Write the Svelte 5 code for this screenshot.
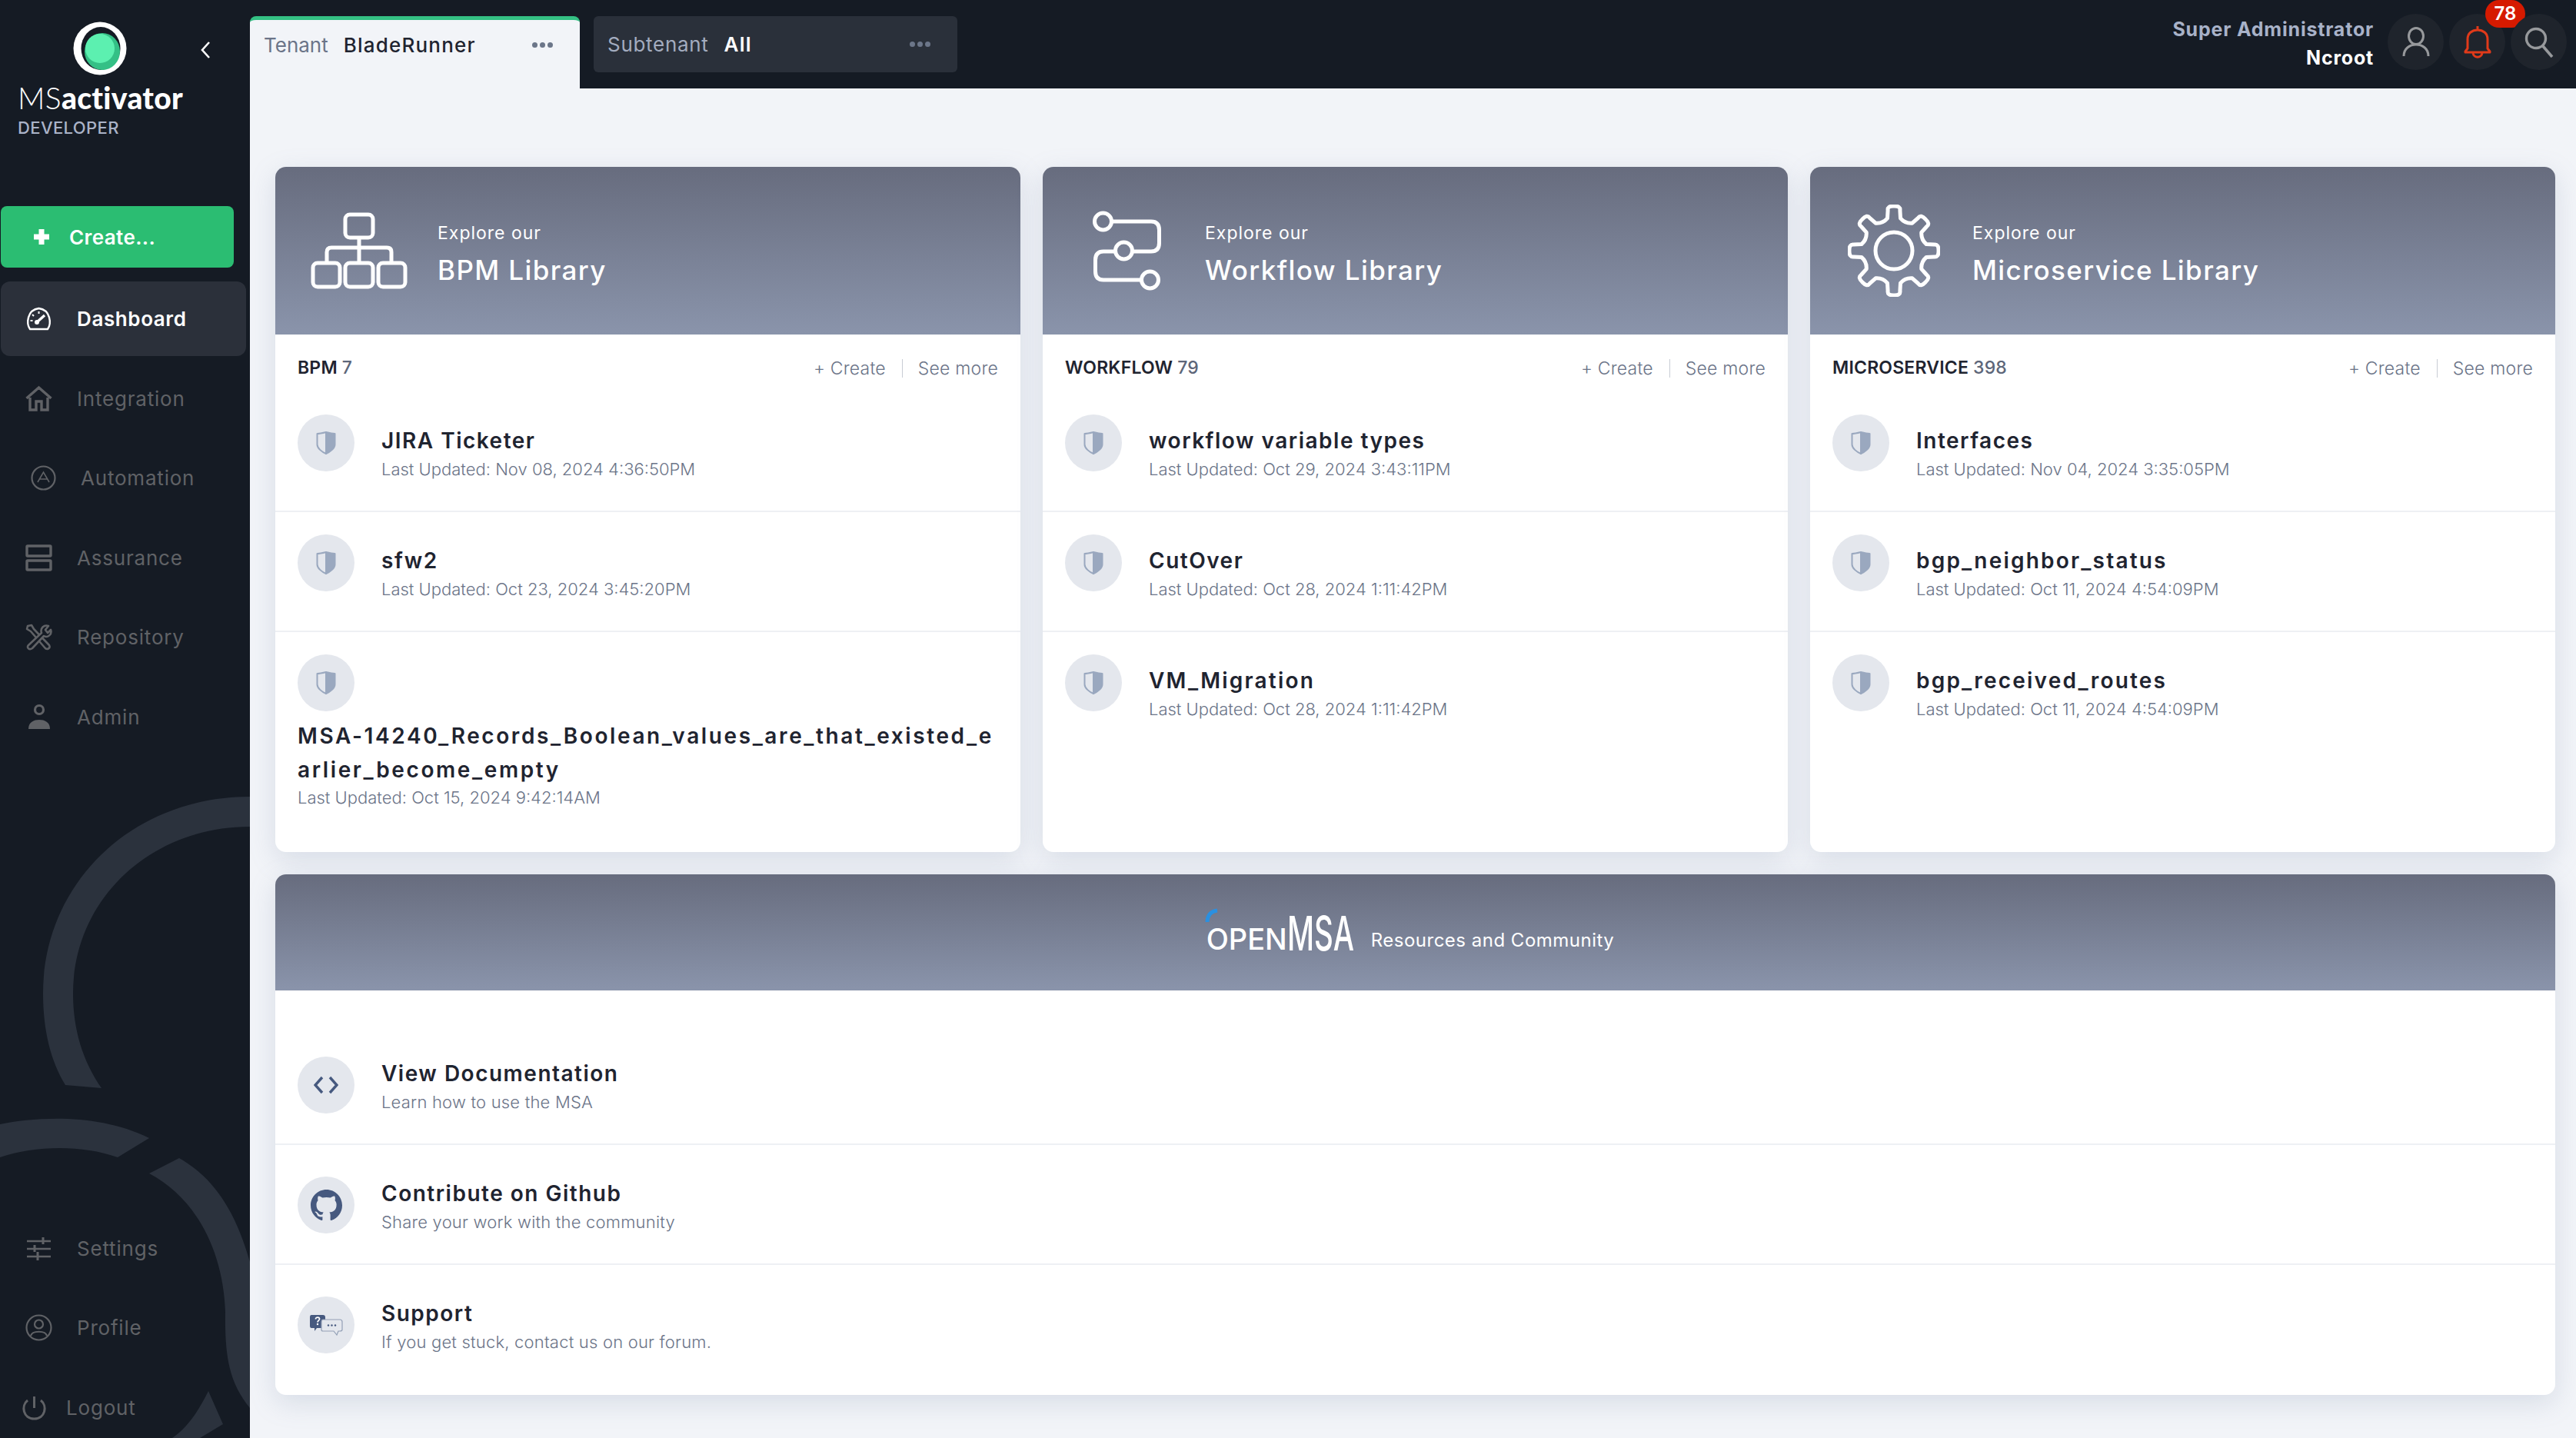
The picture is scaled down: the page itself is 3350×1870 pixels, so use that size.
<script>
  function gearPath(cx, cy, rOut, rIn, teeth) {
    let d = '';
    const step = (Math.PI * 2) / teeth;
    const pt = (r, a) => (cx + r * Math.sin(a)).toFixed(1) + ' ' + (cy - r * Math.cos(a)).toFixed(1);
    for (let i = 0; i < teeth; i++) {
      const a = i * step;
      const w = 0.15;
      d += (i === 0 ? 'M' : 'L') + pt(rIn, a - 0.2);
      d += 'L' + pt(rOut - 5, a - w) + 'Q' + pt(rOut + 1, a - w) + ' ' + pt(rOut, a);
      d += 'Q' + pt(rOut + 1, a + w) + ' ' + pt(rOut - 5, a + w);
      d += 'L' + pt(rIn, a + 0.2);
      d += 'Q' + pt(rIn - 5, a + step / 2) + ' ' + pt(rIn, a + step - 0.2);
    }
    return d + 'Z';
  }
  const gear = gearPath(60, 60, 58, 43, 8);

  const cards = [
    { key: 'bpm', title: 'BPM Library', label: 'BPM', count: 7, rows: [
      { name: 'JIRA Ticketer', date: 'Nov 08, 2024 4:36:50PM' },
      { name: 'sfw2', date: 'Oct 23, 2024 3:45:20PM' },
      { lines: ['MSA-14240_Records_Boolean_values_are_that_existed_e', 'arlier_become_empty'], date: 'Oct 15, 2024 9:42:14AM' }
    ]},
    { key: 'wf', title: 'Workflow Library', label: 'WORKFLOW', count: 79, rows: [
      { name: 'workflow variable types', date: 'Oct 29, 2024 3:43:11PM' },
      { name: 'CutOver', date: 'Oct 28, 2024 1:11:42PM' },
      { name: 'VM_Migration', date: 'Oct 28, 2024 1:11:42PM' }
    ]},
    { key: 'ms', title: 'Microservice Library', label: 'MICROSERVICE', count: 398, rows: [
      { name: 'Interfaces', date: 'Nov 04, 2024 3:35:05PM' },
      { name: 'bgp_neighbor_status', date: 'Oct 11, 2024 4:54:09PM' },
      { name: 'bgp_received_routes', date: 'Oct 11, 2024 4:54:09PM' }
    ]}
  ];
  const resources = [
    { key: 'code', name: 'View Documentation', sub: 'Learn how to use the MSA' },
    { key: 'git', name: 'Contribute on Github', sub: 'Share your work with the community' },
    { key: 'chat', name: 'Support', sub: 'If you get stuck, contact us on our forum.' }
  ];
</script>

{#snippet shield()}
  <svg class="shield" viewBox="0 0 26 30" width="26" height="30">
    <path d="M13 1 C9 2 5 3 1.5 3 V17 C1.5 22 8 27 13 29 Z" fill="none" stroke="#9aa8bf" stroke-width="2" stroke-linejoin="round"/>
    <path d="M13 1 C17 2 21 3 24.5 3 V17 C24.5 22 18 27 13 29 Z" fill="#9aa8bf" stroke="#9aa8bf" stroke-width="2" stroke-linejoin="round"/>
  </svg>
{/snippet}

<div class="page">
  <aside class="side">
    <svg class="swoosh" viewBox="0 0 325 1870" width="325" height="1870">
      <path d="M325 1036 C170 1036 56 1150 56 1292 C56 1340 66 1380 85 1411 L132 1415 C108 1380 95 1340 95 1292 C95 1170 195 1075 325 1075 Z" fill="#2b323d"/>
      <path d="M0 1462 C50 1452 130 1448 194 1480 L153 1505 C105 1488 45 1490 0 1505 Z" fill="#2b323d"/>
      <path d="M233 1506 C275 1530 305 1570 325 1641 L325 1831 C300 1800 292 1770 293 1706 C290 1620 250 1555 194 1526 Z" fill="#2b323d"/>
      <path d="M271 1809 L290 1852 L260 1870 L224 1870 C245 1855 258 1835 271 1809 Z" fill="#2b323d"/>
    </svg>

    <div class="brand">
      <svg class="logo" viewBox="0 0 70 70" width="70" height="70">
        <circle cx="35" cy="35" r="34.5" fill="#fff"/>
        <ellipse cx="36" cy="35" rx="25.5" ry="28" fill="#151b24"/>
        <ellipse cx="38" cy="39" rx="23" ry="24" fill="#34c086"/>
        <ellipse cx="35" cy="35" rx="19" ry="19" fill="#5cf0b0"/>
      </svg>
      <svg class="chev" viewBox="0 0 14 24" width="14" height="24"><path d="M12 2 L3 12 L12 22" fill="none" stroke="#fff" stroke-width="2.6"/></svg>
      <div class="word"><span class="ms">MS</span><b>activator</b></div>
      <div class="dev">DEVELOPER</div>
    </div>

    <button class="create">
      <svg viewBox="0 0 22 22" width="22" height="22"><path d="M11 1 V21 M1 11 H21" stroke="#fff" stroke-width="7"/></svg>
      <span>Create...</span>
    </button>

    <nav class="nav">
      <div class="item active">
        <svg class="ic" viewBox="0 0 35 35"><path d="M6 31 C1 24 2 6 17.5 4 C33 6 34 24 29 31 Z" fill="none" stroke="#fff" stroke-width="2.4" stroke-linejoin="round"/><path d="M15 22 L25 13" stroke="#fff" stroke-width="3.4"/><circle cx="15" cy="22" r="3" fill="#fff"/><path d="M17.5 8 v3 M9 12 l2 2 M6.5 20 h3" stroke="#fff" stroke-width="2"/></svg>
        <span>Dashboard</span>
      </div>
      <div class="item">
        <svg class="ic" viewBox="0 0 35 35"><path d="M1.5 17 L17.5 3 L33.5 17 M6 16 V32 H14 V21 H21 V32 H29 V16" fill="none" stroke="#606266" stroke-width="3.4"/></svg>
        <span>Integration</span>
      </div>
      <div class="item auto">
        <svg class="ic" viewBox="0 0 33 33"><circle cx="16.5" cy="16.5" r="15" fill="none" stroke="#606266" stroke-width="2.2"/><path d="M9 22 L16.5 9 L24 22 M11 18 H22" fill="none" stroke="#606266" stroke-width="1.6"/></svg>
        <span>Automation</span>
      </div>
      <div class="item">
        <svg class="ic" viewBox="0 0 35 35"><rect x="2" y="2" width="31" height="13" rx="1" fill="none" stroke="#606266" stroke-width="3.4"/><rect x="2" y="21" width="31" height="12" rx="1" fill="none" stroke="#606266" stroke-width="3.4"/></svg>
        <span>Assurance</span>
      </div>
      <div class="item">
        <svg class="ic" viewBox="0 0 35 35"><path d="M3 3 L8 2 L11 7 L31 28 C33 32 28 35 25 31 L7 10 L2 7 Z" fill="none" stroke="#606266" stroke-width="2.6" stroke-linejoin="round"/><path d="M4 28 L21 12 C19 6 24 1 30 3 L26 8 L29 12 L33 8 C35 14 29 19 24 16 L9 32 C5 35 1 31 4 28 Z" fill="#151b24" stroke="#606266" stroke-width="2.6" stroke-linejoin="round"/></svg>
        <span>Repository</span>
      </div>
      <div class="item">
        <svg class="ic" viewBox="0 0 35 35"><circle cx="18" cy="8" r="5.5" fill="none" stroke="#606266" stroke-width="3.2"/><path d="M4 33 C4 24 11 21 18 21 C25 21 32 24 32 33 Z" fill="#606266"/><path d="M8 29 C10 26 14 25 18 25" fill="none" stroke="#606266"/></svg>
        <span>Admin</span>
      </div>
    </nav>

    <nav class="nav bottom">
      <div class="item">
        <svg class="ic" viewBox="0 0 35 35"><path d="M2 8 H33 M2 18 H33 M2 28 H33" stroke="#606266" stroke-width="2.6"/><path d="M23 3 V12 M12 13 V22 M16 22 V33" stroke="#606266" stroke-width="3"/></svg>
        <span>Settings</span>
      </div>
      <div class="item">
        <svg class="ic" viewBox="0 0 35 35"><circle cx="17.5" cy="17.5" r="16" fill="none" stroke="#606266" stroke-width="2.2"/><circle cx="17.5" cy="13" r="5.5" fill="none" stroke="#606266" stroke-width="2.2"/><path d="M7 28 C9 21 26 21 28 28" fill="none" stroke="#606266" stroke-width="2.2"/></svg>
        <span>Profile</span>
      </div>
      <div class="item out">
        <svg class="ic" viewBox="0 0 33 33"><path d="M8 7 C-1 14 2 31 16.5 31 C31 31 34 14 25 7" fill="none" stroke="#606266" stroke-width="3"/><path d="M16.5 2 V17" stroke="#606266" stroke-width="3"/></svg>
        <span>Logout</span>
      </div>
    </nav>
  </aside>

  <div class="right">
    <header class="top">
      <div class="tab on">
        <span class="k">Tenant</span><span class="v">BladeRunner</span>
        <i class="dots"><b></b><b></b><b></b></i>
      </div>
      <div class="tab off">
        <span class="k">Subtenant</span><span class="v">All</span>
        <i class="dots"><b></b><b></b><b></b></i>
      </div>
      <div class="user">
        <div class="names"><span class="role">Super Administrator</span><span class="nm">Ncroot</span></div>
        <div class="rb">
          <svg viewBox="0 0 36 40" width="36" height="40"><ellipse cx="18" cy="12" rx="9.5" ry="10.5" fill="none" stroke="#97999c" stroke-width="3"/><path d="M2 38 C2 28 10 23 18 23 C26 23 34 28 34 38" fill="none" stroke="#97999c" stroke-width="3"/></svg>
        </div>
        <div class="rb">
          <svg viewBox="0 0 36 44" width="36" height="44"><path d="M18 1 V6 M5 30 V18 C5 10 11 6 18 6 C25 6 31 10 31 18 V30 L34 34 V35 H2 V34 Z" fill="none" stroke="#e03a1a" stroke-width="3" stroke-linejoin="round"/><path d="M12 36 C13 43 23 43 24 36" fill="none" stroke="#e03a1a" stroke-width="3"/></svg>
          <span class="badge">78</span>
        </div>
        <div class="rb">
          <svg viewBox="0 0 38 40" width="38" height="40"><circle cx="15" cy="15" r="12.5" fill="none" stroke="#97999c" stroke-width="3.4"/><path d="M24 25 L36 39" stroke="#97999c" stroke-width="3.6"/></svg>
        </div>
      </div>
    </header>

    <main class="content">
      <section class="grid">
        {#each cards as c}
          <article class="card">
            <div class="head">
              <div class="hicon">
                {#if c.key === 'bpm'}
                  <svg viewBox="0 0 126 100" width="126" height="100"><g fill="none" stroke="#fff" stroke-width="5"><rect x="45" y="3" width="36" height="30" rx="6"/><path d="M63 33 V66 M21 66 V52 Q21 46 27 46 H99 Q105 46 105 52 V66"/><rect x="3" y="66" width="35" height="31" rx="6"/><rect x="45" y="66" width="36" height="31" rx="6"/><rect x="88" y="66" width="35" height="31" rx="6"/></g></svg>
                {:else if c.key === 'wf'}
                  <svg viewBox="0 0 126 110" width="126" height="110"><g fill="none" stroke="#fff" stroke-width="5"><circle cx="32.5" cy="17" r="11"/><path d="M43.5 17 H95 Q105.5 17 105.5 28 V45 Q105.5 56 95 56 H70.5"/><circle cx="59.5" cy="55" r="11"/><path d="M48.5 56 H33 Q22.5 56 22.5 67 V82 Q22.5 93 33 93 H82.5"/><circle cx="93.5" cy="93" r="11"/></g></svg>
                {:else}
                  <svg viewBox="0 0 120 120" width="120" height="120"><path d={gear} fill="none" stroke="#fff" stroke-width="5" stroke-linejoin="round"/><circle cx="60" cy="60" r="24" fill="none" stroke="#fff" stroke-width="5"/></svg>
                {/if}
              </div>
              <div class="htext"><span class="exp">Explore our</span><span class="lib">{c.title}</span></div>
            </div>
            <div class="lhead">
              <span class="lab">{c.label} <em>{c.count}</em></span>
              <span class="acts"><a>+ Create</a><i></i><a>See more</a></span>
            </div>
            {#each c.rows as r, i}
              {#if r.lines}
                <div class="row stack">
                  <div class="circ">{@render shield()}</div>
                  <div class="name wrap">{r.lines[0]}<br />{r.lines[1]}</div>
                  <div class="date">Last Updated: {r.date}</div>
                </div>
              {:else}
                <div class="row" class:last={i === 2}>
                  <div class="circ">{@render shield()}</div>
                  <div class="txt"><div class="name" class:us={r.name.includes('_')}>{r.name}</div><div class="date">Last Updated: {r.date}</div></div>
                </div>
              {/if}
            {/each}
          </article>
        {/each}
      </section>

      <section class="card res">
        <div class="head rhead">
          <div class="omsa">
            <span class="op">OPEN</span><span class="msa">MSA</span>
            <svg class="arc" viewBox="0 0 20 20" width="20" height="20"><path d="M3 18 C3 9 8 4 16 3" fill="none" stroke="#2a90e0" stroke-width="5"/></svg>
          </div>
          <span class="rc">Resources and Community</span>
        </div>
        <div class="rlist">
          {#each resources as r, i}
            <div class="rrow" class:last={i === 2}>
              <div class="circ">
                {#if r.key === 'code'}
                  <svg viewBox="0 0 32 24" width="32" height="24"><path d="M11 2 L2 12 L11 22 M21 2 L30 12 L21 22" fill="none" stroke="#46597f" stroke-width="3.4"/></svg>
                {:else if r.key === 'git'}
                  <svg viewBox="0 0 16 16" width="41" height="41"><path fill="#46597f" d="M8 0C3.58 0 0 3.58 0 8c0 3.54 2.29 6.53 5.47 7.59.4.07.55-.17.55-.38 0-.19-.01-.82-.01-1.49-2.01.37-2.53-.49-2.69-.94-.09-.23-.48-.94-.82-1.13-.28-.15-.68-.52-.01-.53.63-.01 1.08.58 1.23.82.72 1.21 1.87.87 2.33.66.07-.52.28-.87.51-1.07-1.78-.2-3.64-.89-3.64-3.95 0-.87.31-1.59.82-2.15-.08-.2-.36-1.02.08-2.12 0 0 .67-.21 2.2.82.64-.18 1.32-.27 2-.27.68 0 1.36.09 2 .27 1.53-1.04 2.2-.82 2.2-.82.44 1.1.16 1.92.08 2.12.51.56.82 1.27.82 2.15 0 3.07-1.87 3.75-3.65 3.95.29.25.54.73.54 1.48 0 1.07-.01 1.93-.01 2.2 0 .21.15.46.55.38A8.013 8.013 0 0016 8c0-4.42-3.58-8-8-8z"/></svg>
                {:else}
                  <svg viewBox="0 0 44 28" width="44" height="28">
                    <path d="M3 1 H18 Q21 1 21 4 V15 Q21 18 18 18 H10 L7 22 V18 H3 Q1 18 1 15 V4 Q1 1 3 1 Z" fill="#46597f"/>
                    <path d="M18 7 H40 Q43 7 43 10 V20 Q43 22 40 22 H38 L36 27 L32 22 H18 Q16 22 16 20 V10 Q16 7 18 7 Z" fill="#e4e7ed" stroke="#93a0b6" stroke-width="1.2"/>
                    <circle cx="25" cy="14.5" r="1.2" fill="#46597f"/><circle cx="29.5" cy="14.5" r="1.2" fill="#46597f"/><circle cx="34" cy="14.5" r="1.2" fill="#46597f"/>
                    <path d="M8.5 6.5 C8.5 3 14 3.5 13.5 6.5 C13.3 8 11 8.5 11 10.5" fill="none" stroke="#fff" stroke-width="1.8"/><circle cx="11" cy="13" r="1.2" fill="#fff"/>
                  </svg>
                {/if}
              </div>
              <div class="rtxt"><div class="name">{r.name}</div><div class="date">{r.sub}</div></div>
            </div>
          {/each}
        </div>
      </section>
    </main>
  </div>
</div>

<style>
  :global(body) { margin: 0; background: #f2f4f8; font-family: Inter, "Liberation Sans", sans-serif; }
  .page { display: grid; grid-template-columns: 325px 1fr; width: 3350px; height: 1870px; overflow: hidden; background: #f2f4f8; }

  .side { position: relative; background: #151b24; height: 1870px; display: flex; flex-direction: column; overflow: hidden; }
  .swoosh { position: absolute; left: 0; top: 0; }
  .brand { position: relative; height: 268px; }
  .logo { position: absolute; left: 95px; top: 28px; }
  .chev { position: absolute; left: 260px; top: 53px; }
  .word { position: absolute; left: 23px; top: 106px; color: #fff; font-size: 39px; line-height: 42px; font-family: Lato, sans-serif; white-space: nowrap; letter-spacing: .3px; }
  .word .ms { font-weight: 300; }
  .word b { font-weight: 900; }
  .dev { position: absolute; left: 23px; top: 152px; font-size: 22px; line-height: 28px; color: #aab3c8; letter-spacing: .4px; font-weight: 500; }
  .create { position: relative; display: flex; align-items: center; gap: 25px; width: 303px; height: 80px; margin-left: 1px; padding: 0 0 0 42px; border: 0; border-radius: 8px; background: #2bbd72; color: #fff; font: 600 26px Inter, sans-serif; letter-spacing: .4px; }
  .nav { position: relative; display: flex; flex-direction: column; gap: 6.5px; padding-left: 1px; }
  .nav:not(.bottom) { margin-top: 18px; }
  .nav.bottom { margin-top: auto; margin-bottom: -8.5px; }
  .item { display: flex; align-items: center; gap: 32px; width: 319px; height: 97px; box-sizing: border-box; padding-left: 32px; border-radius: 12px; color: #606266; font-size: 26px; letter-spacing: .8px; }
  .item .ic { width: 35px; height: 35px; flex: none; }
  .item.active { background: #2b303a; color: #fff; font-weight: 600; letter-spacing: .6px; }
  .item.auto { padding-left: 39px; gap: 32px; }
  .item.auto .ic { width: 33px; height: 33px; }
  .item.out { padding-left: 27px; gap: 25px; }
  .item.out .ic { width: 33px; height: 33px; }

  .right { min-width: 0; display: flex; flex-direction: column; }
  .top { position: relative; height: 115px; flex: none; background: #151b24; display: flex; align-items: flex-start; padding-top: 21px; box-sizing: border-box; gap: 18px; }
  .tab { display: flex; align-items: center; box-sizing: border-box; font-size: 26px; }
  .tab.on { width: 429px; height: 94px; background: #f2f4f8; border-top: 5px solid #34c184; border-radius: 8px 8px 0 0; padding: 0 0 24px 18px; }
  .tab.off { width: 473px; height: 73px; background: #2a303a; border-radius: 6px; padding-left: 18px; }
  .k { color: #6b7488; }
  .tab.off .k { color: #a3acbf; letter-spacing: .7px; }
  .v { font-weight: 500; margin-left: 20px; color: #1f2430; letter-spacing: 1.2px; }
  .tab.off .v { color: #fff; font-weight: 600; }
  .dots { margin-left: auto; display: flex; gap: 3px; margin-right: 35px; }
  .dots b { width: 7px; height: 7px; border-radius: 50%; background: #6c7689; }
  .user { position: absolute; right: 12px; top: 17px; display: flex; align-items: flex-start; gap: 7px; }
  .names { display: flex; flex-direction: column; align-items: flex-end; margin-right: 11px; margin-top: 3px; font-size: 25px; font-weight: 700; line-height: 37px; letter-spacing: .8px; }
  .role { color: #a8b2c8; }
  .nm { color: #fff; }
  .rb { position: relative; width: 73px; height: 73px; margin-top: 1px; border-radius: 50%; background: #1f242c; display: flex; align-items: center; justify-content: center; }
  .badge { position: absolute; left: 47px; top: -18px; width: 52px; height: 36px; border-radius: 18px; background: #d61a00; color: #fff; font-size: 24px; font-weight: 600; line-height: 36px; text-align: center; }

  .content { flex: 1; min-height: 0; padding: 102px 27px 0 33px; display: flex; flex-direction: column; gap: 29px; }
  .grid { display: grid; grid-template-columns: repeat(3, 969px); gap: 29px; height: 891px; }
  .card { background: #fff; border-radius: 14px; box-shadow: 0 10px 34px rgba(120, 135, 170, .22); overflow: hidden; }
  .head { height: 218px; display: flex; align-items: center; background: linear-gradient(#676c7e, #8a94ab); color: #fff; }
  .hicon { width: 211px; box-sizing: border-box; padding-left: 6px; display: flex; justify-content: center; flex: none; }
  .htext { display: flex; flex-direction: column; gap: 8px; padding-top: 7px; }
  .exp { font-size: 23px; line-height: 34px; letter-spacing: 1px; }
  .lib { font-size: 35px; line-height: 46px; font-weight: 500; letter-spacing: 1.4px; }
  .lhead { height: 75px; box-sizing: border-box; padding: 10px 29px 0; display: flex; align-items: center; justify-content: space-between; }
  .lab { font-size: 23px; font-weight: 600; color: #1f2430; letter-spacing: .2px; }
  .lab em { font-style: normal; color: #5d6679; font-weight: 500; }
  .acts { display: flex; align-items: center; margin-top: 2px; font-size: 23px; font-weight: 300; color: #6b7488; letter-spacing: .2px; }
  .acts i { width: 1px; height: 24px; background: #c8ccd4; margin: 0 20px 0 21px; }

  .row { height: 156px; box-sizing: border-box; padding: 29px 29px 0; display: flex; gap: 35px; border-bottom: 2px solid #eef0f4; }
  .row.last { border-bottom: 0; }
  .row.stack { display: block; border-bottom: 0; height: auto; }
  .circ { width: 74px; height: 74px; flex: none; border-radius: 50%; background: #e4e7ed; display: flex; align-items: center; justify-content: center; }
  .txt { padding-top: 14px; }
  .name { font-size: 28px; line-height: 40px; font-weight: 600; color: #1f2430; white-space: nowrap; letter-spacing: 1.5px; }
  .name.us { letter-spacing: 2.2px; }
  .name.wrap { line-height: 44px; margin-top: 10px; letter-spacing: 2.6px; }
  .wrap + .date { margin-top: -1px; }
  .date { font-size: 22px; line-height: 30px; font-weight: 300; color: #6b7488; white-space: nowrap; margin-top: 2px; }

  .res { height: 677px; }
  .rhead { height: 151px; justify-content: center; gap: 26px; padding-right: 13px; box-sizing: border-box; }
  .omsa { position: relative; display: flex; align-items: flex-end; line-height: 1; }
  .op { display: inline-block; width: 105px; font-size: 38px; font-weight: 500; white-space: nowrap; margin-bottom: 3px; }
  .msa { display: inline-block; width: 83px; font-size: 62px; font-weight: 500; white-space: nowrap; transform: scaleX(.62); transform-origin: left bottom; margin-bottom: -2px; }
  .arc { position: absolute; left: -2px; top: -2px; }
  .rc { font-size: 24px; letter-spacing: .5px; margin-top: 20px; }
  .rlist { padding-top: 45px; }
  .rrow { height: 156px; box-sizing: border-box; padding: 41px 29px 0; display: flex; gap: 35px; border-bottom: 2px solid #eef0f4; }
  .rrow.last { border-bottom: 0; }
  .rtxt { margin-top: 2px; }
  .rtxt .date { margin-top: 2px; letter-spacing: .2px; }
</style>
